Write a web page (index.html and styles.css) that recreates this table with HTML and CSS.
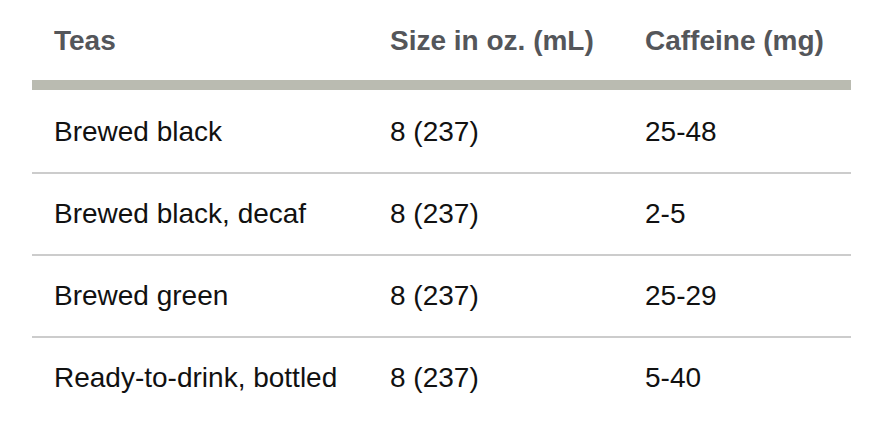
FILE: index.html
```html
<!DOCTYPE html>
<html>
<head>
<meta charset="utf-8">
<link rel="stylesheet" href="styles.css">
</head>
<body>
<div class="wrap">
<table class="tea-table">
  <colgroup><col class="c1"><col class="c2"><col class="c3"></colgroup>
  <thead>
    <tr><th>Teas</th><th>Size in oz. (mL)</th><th>Caffeine (mg)</th></tr>
  </thead>
  <tbody>
    <tr class="first"><td>Brewed black</td><td>8 (237)</td><td>25-48</td></tr>
    <tr><td>Brewed black, decaf</td><td>8 (237)</td><td>2-5</td></tr>
    <tr><td>Brewed green</td><td>8 (237)</td><td>25-29</td></tr>
    <tr><td>Ready-to-drink, bottled</td><td>8 (237)</td><td>5-40</td></tr>
  </tbody>
</table>
</div>
</body>
</html>
```
FILE: styles.css
```css
html, body { margin: 0; padding: 0; background: #fff; }
.wrap { padding: 0 29px 0 32px; }
.tea-table {
  width: 819px;
  border-collapse: separate;
  border-spacing: 0;
  font-family: "Liberation Sans", Arial, sans-serif;
  font-size: 28px;
  line-height: 32px;
  color: #111;
  table-layout: fixed;
}
.c1 { width: 336px; }
.c2 { width: 255px; }
.c3 { width: 228px; }
.tea-table th {
  text-align: left;
  font-weight: bold;
  color: #54565a;
  padding: 25px 22px 23px;
  vertical-align: middle;
  border-bottom: 10px solid #babbb1;
}
.tea-table td {
  padding: 24px 22px;
  vertical-align: middle;
  border-bottom: 2px solid #cccccc;
}
.tea-table tr.first td { padding-top: 26px; }
.tea-table tbody tr:last-child td { border-bottom: none; }
```
